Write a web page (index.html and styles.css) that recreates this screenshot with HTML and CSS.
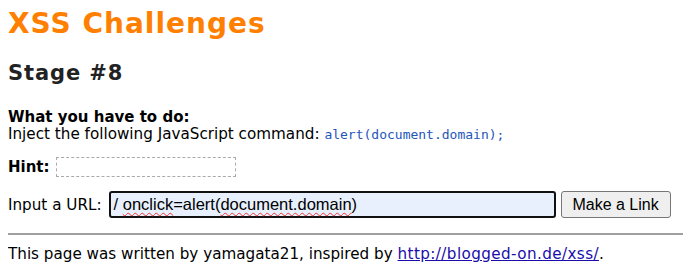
FILE: index.html
```html
<!DOCTYPE html>
<html>
<head>
<meta charset="utf-8">
<link rel="stylesheet" href="styles.css">
</head>
<body>
<h1 class="title">XSS Challenges</h1>
<h2 class="stage">Stage #8</h2>
<div class="task">
  <b class="task-head">What you have to do:</b><br>
  Inject the following JavaScript command: <code class="cmd">alert(document.domain);</code>
</div>
<div class="hint-row"><b>Hint:</b> <span class="hint-box"></span></div>
<form class="url-row">
  <span>Input a URL:</span>
  <div class="url-input"><span class="typed"><span class="slash">/</span> <span class="sq">onclick</span>=alert(<span class="sq">document.domain</span>)</span></div>
  <button type="button" class="make">Make a Link</button>
</form>
<hr class="rule">
<p class="footer">This page was written by yamagata21, inspired by <a href="#" class="src">http://blogged-on.de/xss/</a>.</p>
</body>
</html>
```
FILE: styles.css
```css
body {
  margin: 8px;
  font-family: "DejaVu Sans", Verdana, sans-serif;
  font-size: 15.2px;
  color: #000;
  background: #fff;
}
.title {
  margin: 0;
  font-size: 28px;
  letter-spacing: 1px;
  line-height: 32px;
  color: #ff7f00;
}
.stage {
  margin: 20px 0 0;
  font-size: 21px;
  letter-spacing: 0.9px;
  line-height: 26px;
  color: #222;
}
.task {
  margin-top: 23px;
  line-height: 17px;
}
.task-head {
  font-size: 15px;
}
.cmd {
  font-family: "DejaVu Sans Mono", "Liberation Mono", monospace;
  font-size: 13px;
  color: #2456b8;
}
.hint-row {
  margin-top: 14px;
  display: flex;
  align-items: center;
  gap: 6px;
}
.hint-row b {
  font-size: 15px;
}
.hint-box {
  display: inline-block;
  width: 178px;
  height: 18px;
  border: 1px dashed #aaa;
}
.url-row {
  margin: 14px 0 0;
  display: flex;
  align-items: center;
}
.url-input {
  margin-left: 7px;
  width: 440px;
  height: 23px;
  border: 2px solid #111;
  border-radius: 3px;
  background: #e8f0fe;
  display: flex;
  align-items: center;
  padding-left: 3px;
  font-family: "Liberation Sans", Arial, sans-serif;
  font-size: 16.5px;
}
.sq {
  text-decoration: underline wavy #e33;
  text-decoration-thickness: 1px;
  text-underline-offset: 2px;
}
.make {
  margin-left: 5px;
  height: 27px;
  width: 110px;
  font-family: "Liberation Sans", Arial, sans-serif;
  font-size: 16px;
  background: #efefef;
  border: 1px solid #767676;
  border-radius: 3px;
  padding: 0;
}
.rule {
  margin: 15px 0 0;
  border: none;
  border-top: 2px solid #a0a0a0;
}
.footer {
  margin: 10px 0 0;
}
.src {
  color: #1a0dab;
  letter-spacing: 0.4px;
}
```
